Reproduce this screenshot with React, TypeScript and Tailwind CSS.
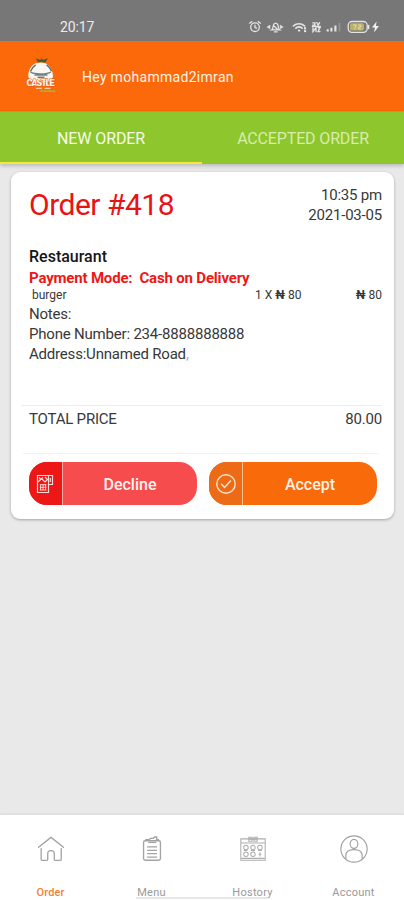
import React from "react";

function StatusIcons() {
  return (
    <svg className="h-4 w-[134px]" viewBox="0 0 134 16" fill="none" stroke="#e4e4e4" strokeWidth="1.3" strokeLinecap="round">
      <circle cx="7" cy="8.2" r="4.3" />
      <path d="M7 6.2v2.3l1.6.7M1.6 4.2 3.8 2.6M12.4 4.2 10.2 2.6" />
      <path d="M19.2 7.9 22 6.1v3.6zM35 7.9l-2.8-1.8v3.6z" fill="#e4e4e4" strokeWidth=".5" />
      <path d="M23.8 10.9c1.4-.8 1.1-3 1.6-4.7.7-2.7 3.9-2.7 4.6 0 .5 1.7.2 3.9 1.6 4.7zM26.4 12.8h2.8M26 7l3.2 3" />
      <path d="M45.5 6.9c3.2-2.9 7.8-2.9 11 0M47.9 9.2c1.9-1.5 4.4-1.5 6.2 0" strokeWidth="1.7" />
      <path d="M51 11.6h.1M57 9.2v.3M57 12.2h.2" strokeWidth="2.3" />
      <path d="M64.7 3.8h2.2v2.4h-2.2M68.8 3.6l1.3 2.6 1.5-2.6M65 8.6v4l3-3.8v3.8M70 8.6h2l-2 4h2M64.4 7.4h8" strokeWidth="1.35" />
      <path d="M79.7 10.2v2.4M83.4 8.7v3.9M87.4 6.6v6" strokeWidth="2.1" strokeLinecap="butt" />
      <path d="M91.5 4v8.6" stroke="#929292" strokeWidth="1.8" strokeLinecap="butt" />
      <rect x="100.2" y="2.5" width="19" height="10.8" rx="3.8" strokeWidth="1.3" />
      <rect x="102" y="4.2" width="14" height="7.4" rx="1.5" fill="#b9b06a" stroke="none" />
      <path d="M105.5 6h2.7l-1.6 4M110.7 6h2.2v2h-2.2v2h2.2" stroke="#e1dbad" strokeWidth="1" />
      <path d="M120.6 6.4v3" strokeWidth="1.5" />
      <path d="M128.6 2.4 124 8.6h2.9l-.8 5 4.8-6.6h-3z" fill="#f2f2f2" stroke="none" />
    </svg>
  );
}

function Logo() {
  return (
    <svg className="h-[40px] w-[32px]" viewBox="0 0 32 40">
      <path d="M3.2 20.5C3.4 11 8.6 6.4 15.5 6.4S27.7 11 28 20.5c-1 4.6-5.7 6-12 6s-11.700-1.400-12.800-6z" fill="#fbf7f2" />
      <path d="M13 6.600 10.800 2.400l4.400 1.400 1.300-1.300 1.600 1.300 4.800-1.600-2.600 4.600-3.700-.9z" fill="#41603e" />
      <path d="M5.400 15.500C7 12.400 8 10.600 10.600 8.900M21.600 8.800c2.600 1.600 3.800 3.400 5 6.500" stroke="#647174" strokeWidth="1.500" fill="none" />
      <path d="M5.500 16.200c4.100 2.400 16.500 2.400 20.400-.2M9.500 19h13M12.500 21.200h7" stroke="#6d8289" strokeWidth="1.400" fill="none" />
      <text x="15.500" y="30" textAnchor="middle" className="font-[Roboto,sans-serif] text-[9.500px] font-black" fill="#fff1e4" stroke="#e45b20" strokeWidth="1" paintOrder="stroke" textLength="28">CASTLE</text>
      <path d="M11 32.400h6M19.500 32.400h6" stroke="#fbc6a1" strokeWidth="1.200" />
      <path d="M15 35.400c3-1.800 4 .5 7-.4l8.500.2" stroke="#b0b02b" strokeWidth="1.500" fill="none" />
    </svg>
  );
}

function DeclineIcon() {
  return (
    <svg className="ml-[7px] h-[20px] w-[18px]" viewBox="0 0 18 20" fill="none" stroke="#ffd9d6" strokeWidth="1.2">
      <path d="M1.500 1.500h11v17h-11zM12.500 1.500H16.500v9h-4" />
      <path d="M2 8l3.500-3.500L9 8l3-3M3 3.500l2 2 2-2M9 3l2 2M14.300 4v4" />
      <path d="M3.800 10.600h6.600M4.600 11v5M7.100 11v5M9.600 11v5M3.800 13.300h6.600M3.800 16h6.600" strokeWidth="1" />
    </svg>
  );
}

function AcceptIcon() {
  return (
    <svg className="ml-[6px] h-[22px] w-[22px]" viewBox="0 0 22 22" fill="none" stroke="#ffe2c7" strokeWidth="1.4">
      <circle cx="11" cy="11" r="9.2" />
      <path d="m6.200 10.800 3.400 3.700 6.300-7" />
    </svg>
  );
}

function HomeIcon() {
  return (
    <svg className="h-8 w-8" viewBox="0 0 32 32" fill="none" stroke="#a3a3a3" strokeWidth="1.4" strokeLinejoin="round" strokeLinecap="round">
      <path d="M2.700 14.200 16 3.600l13.300 10.600M5.500 15.500v11.300c0 .9.4 1.300 1.300 1.300h4.400c.9 0 1.300-.4 1.300-1.300V21c0-4.400 7-4.400 7 0v5.800c0 .9.4 1.300 1.300 1.300h4.800c.9 0 1.300-.4 1.300-1.300V15.500" />
    </svg>
  );
}

function MenuIcon() {
  return (
    <svg className="h-8 w-8" viewBox="0 0 32 32" fill="none" stroke="#a3a3a3" strokeWidth="1.4">
      <rect x="7" y="7.2" width="18" height="20.8" rx="1.8" />
      <path d="M9.500 7.200V6h3.500l1.200-1.400h3.300l1.200-1.400h2.300V6h1.800v1.200M12 9h8.500" />
      <path d="M10.800 13.800h10.600M10.800 17.500h10.600M10.800 21h10.600M10.800 24.700h10.600" />
    </svg>
  );
}

function HistoryIcon() {
  return (
    <svg className="h-8 w-8" viewBox="0 0 32 32" fill="none" stroke="#adadad" strokeWidth="1.1">
      <path d="M3 5.200h26V28H3zM3 9.600h26" />
      <path d="M11.500 3.500h3.500v4.200h-3.500zM17 3.500h3.500v4.200H17zM12 5.500h8.500" />
      <circle cx="8.500" cy="14.500" r="2.400" />
      <circle cx="16" cy="14.500" r="2.400" />
      <circle cx="23.400" cy="14.500" r="2.400" />
      <circle cx="8.500" cy="21.700" r="2.400" />
      <circle cx="16" cy="21.700" r="2.400" />
      <path d="M23.400 19.400v4.500M22 21.700h2.800M6 17.600h4M13.800 17.600h4.400M21.400 17.600h4M3.500 26h25" />
    </svg>
  );
}

function AccountIcon() {
  return (
    <svg className="h-8 w-8" viewBox="0 0 32 32" fill="none" stroke="#9f9f9f" strokeWidth="1.2">
      <circle cx="16" cy="16" r="14" />
      <ellipse cx="16" cy="10.500" rx="4.100" ry="4.800" />
      <path d="M7.300 26.800V23c0-4.700 3.200-6.400 8.700-6.400s8.700 1.700 8.700 6.400v3.800" />
    </svg>
  );
}

function NavItem({ icon, label, active = false }: { icon: React.ReactNode; label: string; active?: boolean }) {
  return (
    <div className="flex w-[101px] flex-col items-center pt-[19px]">
      {icon}
      <span className={active ? "mt-[22px] text-[11px] leading-[14px] font-medium tracking-[0.1px] text-[#f58235]" : "mt-[22px] text-[11px] leading-[14px] tracking-[0.25px] text-[#999]"}>{label}</span>
    </div>
  );
}

export default function App() {
  return (
    <div className="flex h-[900px] w-[404px] flex-col overflow-hidden bg-[#e9e9e9] font-[Roboto,sans-serif] text-[#383838]">
      <div className="flex h-[41px] shrink-0 items-start justify-between bg-[#777] pt-[19px] pr-[22px] pl-[60px]">
        <span className="text-[14px] leading-4 tracking-[-0.1px] text-[#ececec]">20:17</span>
        <StatusIcons />
      </div>
      <header className="flex h-[70px] shrink-0 items-center bg-[#fb690b] pl-[25px]">
        <Logo />
        <span className="ml-[25px] pt-[2px] text-[14px] leading-5 tracking-[0.3px] text-[#fff3e6]">Hey mohammad2imran</span>
      </header>
      <nav className="flex h-[53px] shrink-0 border-t border-[#c39a20] bg-[#8dc62d] text-[16px] shadow-[0_2px_4px_rgba(0,0,0,0.2)]">
        <div className="flex flex-1 items-center justify-center border-b-2 border-[#f5e83a] pt-[4px] tracking-[-0.1px] text-[#f6fbe9]">NEW ORDER</div>
        <div className="flex flex-1 items-center justify-center pt-[2px] tracking-[-0.15px] text-[#d8edab]">ACCEPTED ORDER</div>
      </nav>

      <main className="flex-1 pt-2 pr-[10px] pl-[11px]">
        <section className="h-[347px] rounded-[9px] bg-white pt-[13px] pr-3 pl-[18px] shadow-[0_1px_3px_rgba(0,0,0,0.3)]">
          <div className="flex justify-between">
            <h1 className="text-[30px] leading-10 tracking-[-0.5px] text-[#e81414]">Order #418</h1>
            <div className="text-right text-[15px] leading-5 tracking-[-0.2px]">
              <div>10:35 pm</div>
              <div>2021-03-05</div>
            </div>
          </div>
          <h2 className="mt-[22px] text-[16px] leading-5 font-medium text-[#161616]">Restaurant</h2>
          <div className="mt-px text-[15px] leading-5 font-bold tracking-[-0.18px] whitespace-pre text-[#ed1717]">Payment Mode:  Cash on Delivery</div>
          <div className="-mt-px mb-px flex h-4 text-[12px] leading-4">
            <span className="w-[226px] pl-[3px]">burger</span>
            <span>1 X <b>₦</b> 80</span>
            <span className="ml-auto"><b>₦</b> 80</span>
          </div>
          <div className="text-[15px] leading-5 tracking-[-0.2px]">
            <div>Notes:</div>
            <div>Phone Number: 234-8888888888</div>
            <div>Address:Unnamed Road<span className="text-[#aaa]">,</span></div>
          </div>
          <div className="mt-[41px] -ml-2 h-px bg-[#ededed]" />
          <div className="mt-[3px] flex justify-between text-[15px] leading-5 tracking-[-0.2px]">
            <span>TOTAL PRICE</span>
            <span>80.00</span>
          </div>
          <div className="mt-6 mr-[3px] -ml-[6px] h-px bg-[#f2f2f2]" />
          <div className="mt-2 flex gap-[12px]">
            <button className="flex h-[43px] w-[168px] overflow-hidden rounded-[18px] bg-[#f64c4d] text-[#fff3f2]">
              <span className="flex h-full w-[34px] items-center border-r border-[#ffaaa7] bg-[#ee1717]"><DeclineIcon /></span>
              <span className="flex h-full flex-1 items-center justify-center pt-[2px] text-[16px] font-medium">Decline</span>
            </button>
            <button className="flex h-[43px] w-[168px] overflow-hidden rounded-[18px] bg-[#f96a0b] text-[#fff3e8]">
              <span className="flex h-full w-[34px] items-center border-r border-[#ffc08c] bg-[#ed6b17]"><AcceptIcon /></span>
              <span className="flex h-full flex-1 items-center justify-center pt-[2px] text-[16px] font-medium">Accept</span>
            </button>
          </div>
        </section>
      </main>

      <footer className="relative flex h-[85px] shrink-0 bg-white shadow-[0_-1px_2px_rgba(0,0,0,0.08)]">
        <NavItem icon={<HomeIcon />} label="Order" active />
        <NavItem icon={<MenuIcon />} label="Menu" />
        <NavItem icon={<HistoryIcon />} label="Hostory" />
        <NavItem icon={<AccountIcon />} label="Account" />
        <div className="absolute bottom-[1px] left-[136px] h-[2px] w-[132px] bg-[#e6e6e6]" />
      </footer>
    </div>
  );
}
